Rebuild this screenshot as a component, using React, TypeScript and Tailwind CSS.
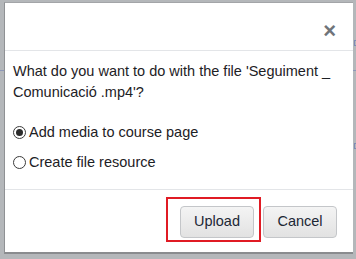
export default function App() {
  return (
    <div
      className="relative w-[356px] h-[259px] overflow-hidden bg-[#b4b7ba] pt-[2px] pl-[4px]"
      style={{ fontFamily: '"Liberation Sans", Arial, sans-serif' }}
    >
      {/* bits of the page behind the overlay */}
      <div className="absolute left-0 top-[70px] w-[4px] h-px bg-[#8d97b8]" />
      <div className="absolute right-0 top-[70px] w-[3px] h-px bg-[#8d97b8]" />
      <div className="absolute right-0 top-[40px] w-[2px] h-[6px] border border-r-0 border-[#7f8bb5]" />
      <div className="absolute right-0 top-[143px] w-[2px] h-[6px] border border-r-0 border-[#7f8bb5]" />

      <div className="relative w-[349px] h-[252px] bg-white border-l border-t border-b-2 border-l-[#8f9194] border-t-[#a3a5a8] border-b-[#8a8c8f] flex flex-col">
        {/* header */}
        <div className="h-[48px] shrink-0 border-b border-[#e3e5e8] flex items-center justify-end pr-[17px]">
          <span className="text-[22px] leading-none font-bold text-[#6f747a] mt-[8px]">×</span>
        </div>

        {/* body */}
        <div className="flex-1 px-[8px] pt-[10px] text-[14.5px] leading-[21px] text-[#1d2125]">
          <p>What do you want to do with the file 'Seguiment _ Comunicació .mp4'?</p>
          <div className="mt-[19px] flex flex-col gap-[9px]">
            <label className="flex items-center gap-[3px]">
              <span className="w-[13px] h-[13px] rounded-full border border-[#3b3b3b] flex items-center justify-center">
                <span className="w-[7px] h-[7px] rounded-full bg-[#2b2b2b]" />
              </span>
              <span>Add media to course page</span>
            </label>
            <label className="flex items-center gap-[3px]">
              <span className="w-[13px] h-[13px] rounded-full border border-[#3b3b3b]" />
              <span>Create file resource</span>
            </label>
          </div>
        </div>

        {/* footer */}
        <div className="h-[63px] shrink-0 border-t border-[#e3e5e8] flex justify-end items-start pt-[16px] pr-[16px] gap-[9px]">
          <div className="relative">
            <button className="w-[74px] h-[32px] rounded-[4px] border border-[#c4c6c9] bg-gradient-to-b from-[#f4f4f4] to-[#e2e2e2] text-[14.5px] text-[#1c2735]">
              Upload
            </button>
            <div className="absolute left-[-14px] top-[-9px] w-[95px] h-[45px] border-2 border-[#e01b24]" />
          </div>
          <button className="w-[74px] h-[32px] rounded-[4px] border border-[#c4c6c9] bg-gradient-to-b from-[#f4f4f4] to-[#e2e2e2] text-[14.5px] text-[#1c2735]">
            Cancel
          </button>
        </div>
      </div>
    </div>
  );
}
